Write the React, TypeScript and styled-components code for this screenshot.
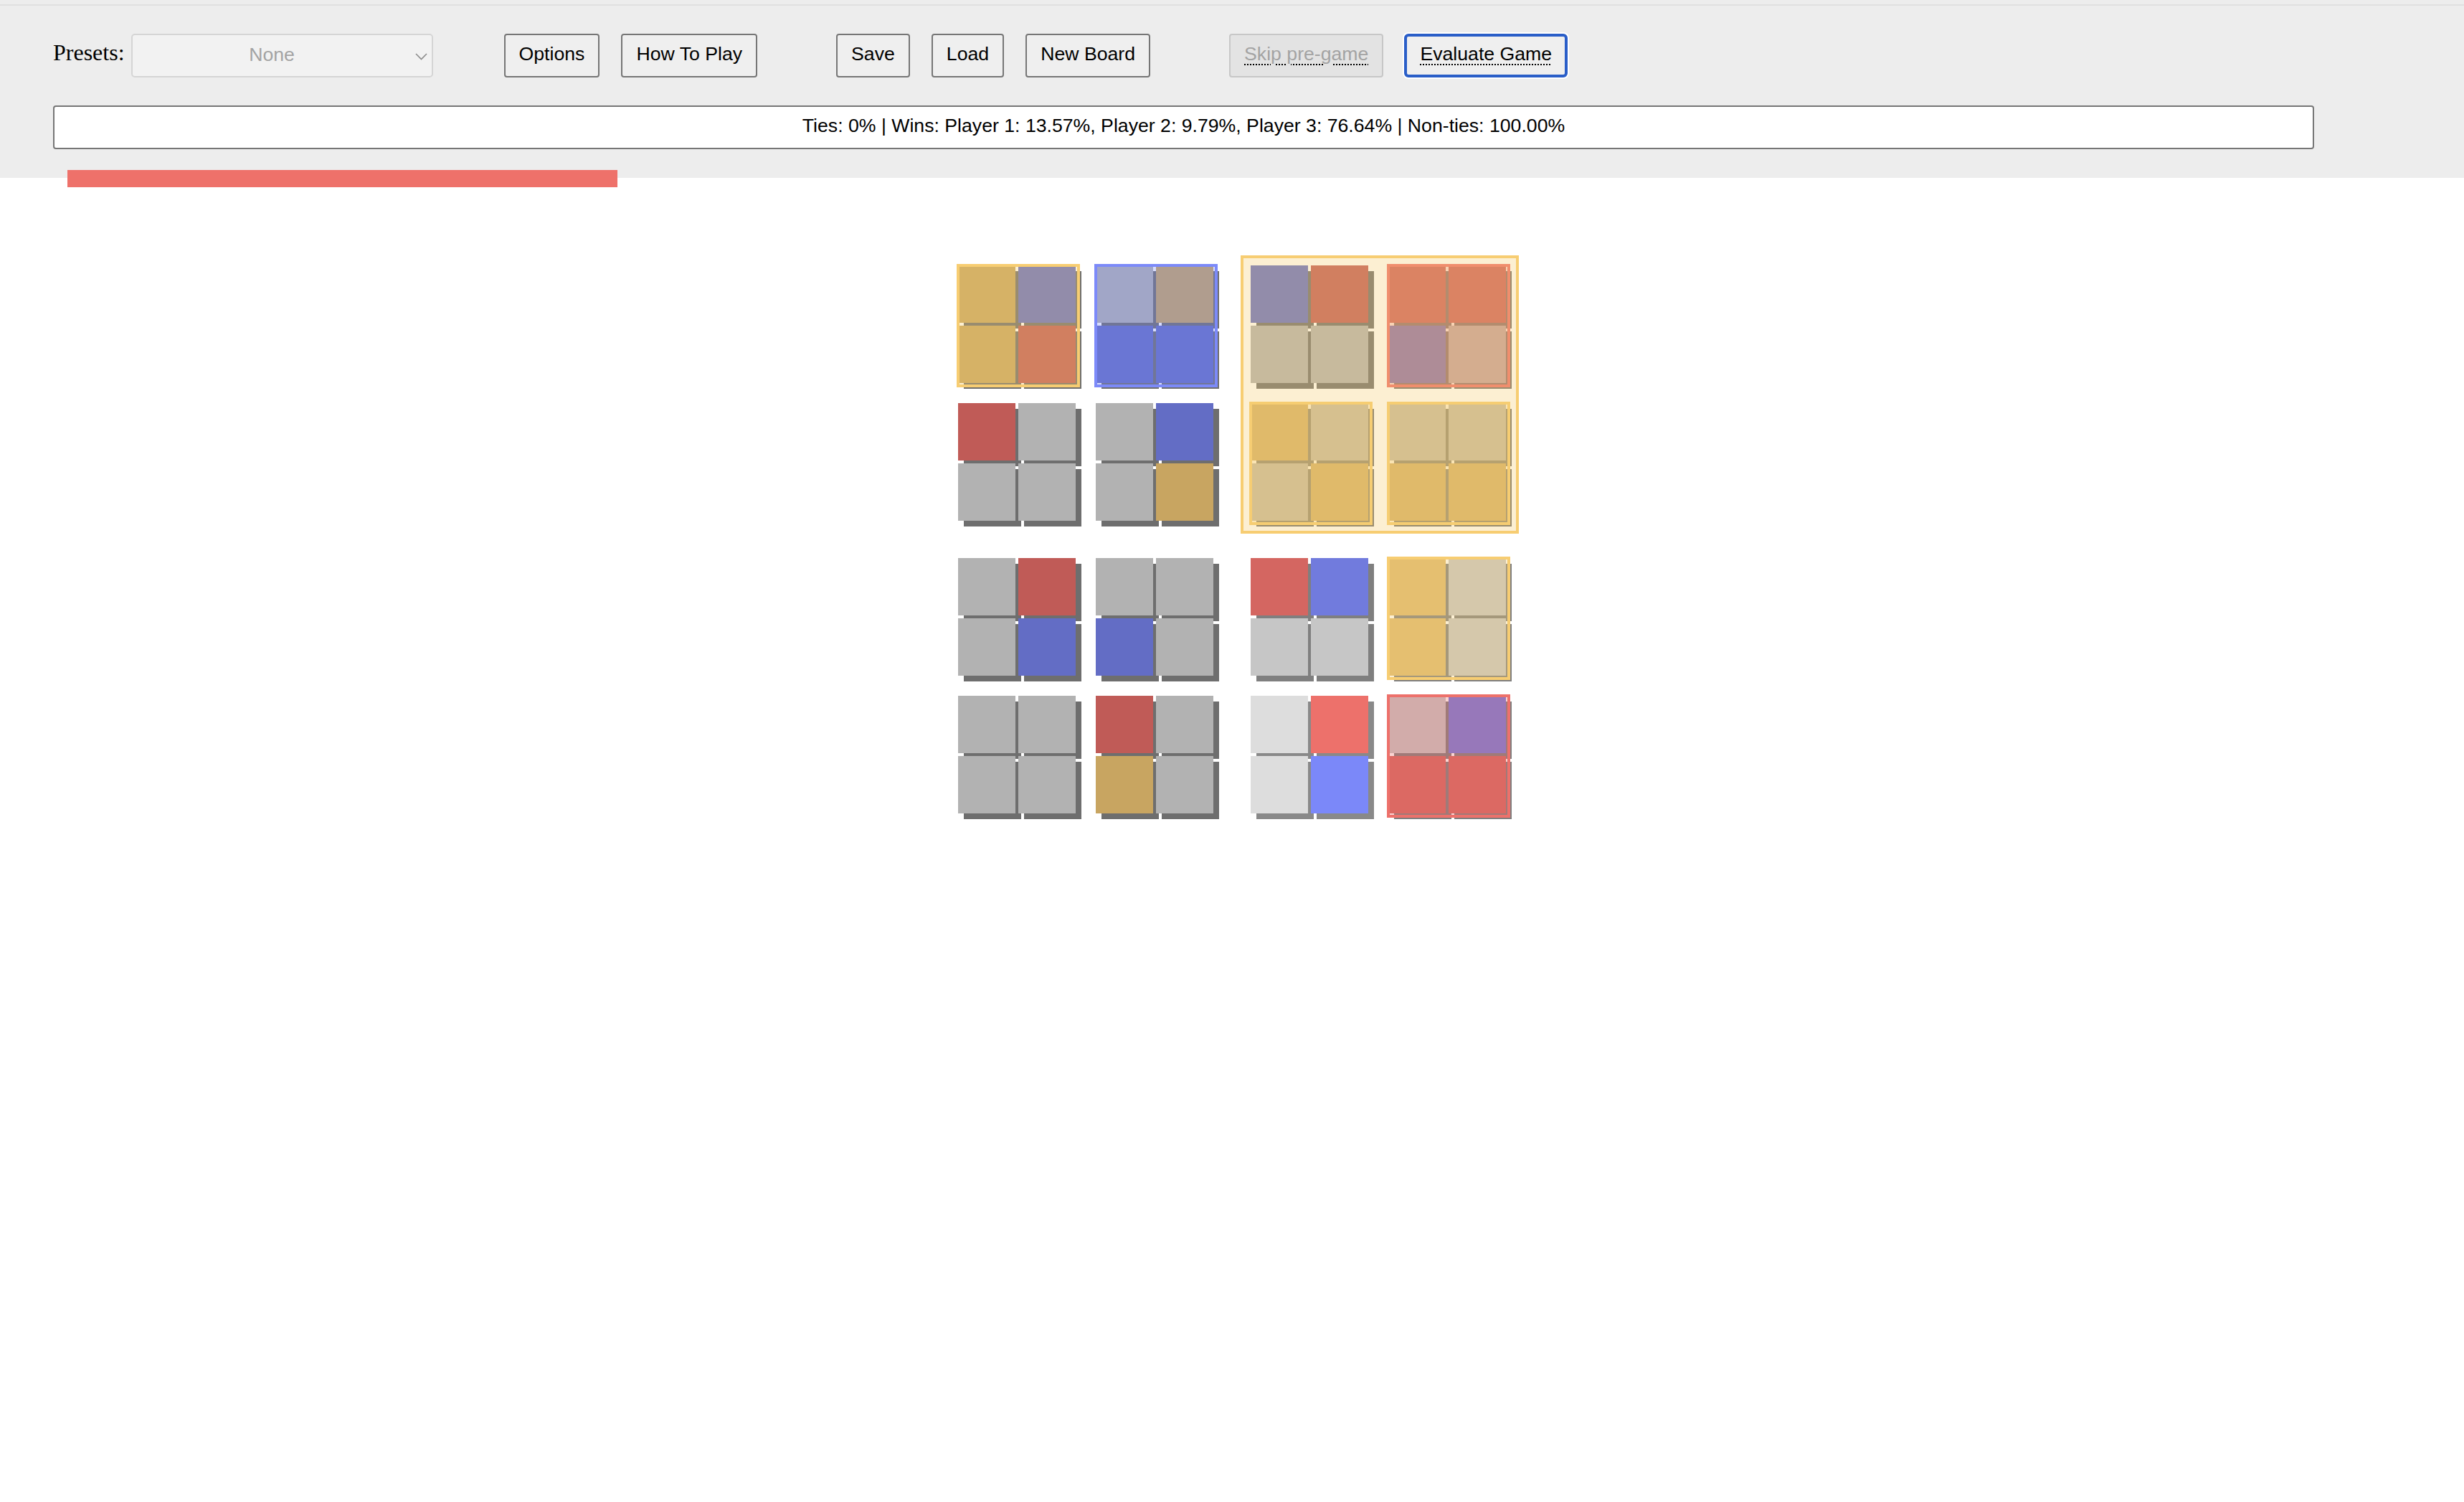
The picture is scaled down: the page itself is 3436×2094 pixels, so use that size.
import React from "react";
import styled, { createGlobalStyle } from "styled-components";

const GlobalStyle = createGlobalStyle`
  html, body {
    margin: 0;
    padding: 0;
    background: #ffffff;
  }
  body {
    font-family: "Liberation Sans", Arial, sans-serif;
    color: #000;
  }
`;

type Tone = "base" | "light" | "lighter";
type Piece = "g" | "r" | "b" | "y";
type Mark = "yellow" | "blue" | "red" | null;

const palettes: Record<Tone, Record<Piece | "shadow", string>> = {
  base: { g: "#b2b2b2", r: "#c05b57", b: "#636dc5", y: "#c8a561", shadow: "#6e6e6e" },
  light: { g: "#c6c6c6", r: "#d46661", b: "#717bdd", y: "#deb96f", shadow: "#7f7f7f" },
  lighter: { g: "#dddddd", r: "#ed716b", b: "#7b88f9", y: "#f7ce72", shadow: "#898989" },
};

const marks: Record<Exclude<Mark, null>, { border: string; fill: string }> = {
  yellow: { border: "#f7cd72", fill: "rgba(247, 205, 114, 0.32)" },
  blue: { border: "#7c8af9", fill: "rgba(124, 138, 249, 0.3)" },
  red: { border: "#ed716b", fill: "rgba(237, 113, 107, 0.3)" },
};

interface MiniData {
  cells: Piece[];
  tone?: Tone;
  mark?: Mark;
}
interface GroupData {
  mark?: Mark;
  minis: MiniData[];
}

const groups: GroupData[] = [
  {
    minis: [
      { cells: ["y", "b", "y", "r"], mark: "yellow" },
      { cells: ["g", "y", "b", "b"], mark: "blue" },
      { cells: ["r", "g", "g", "g"] },
      { cells: ["g", "b", "g", "y"] },
    ],
  },
  {
    mark: "yellow",
    minis: [
      { cells: ["b", "r", "g", "g"] },
      { cells: ["r", "r", "b", "g"], mark: "red" },
      { cells: ["y", "g", "g", "y"], mark: "yellow" },
      { cells: ["g", "g", "y", "y"], mark: "yellow" },
    ],
  },
  {
    minis: [
      { cells: ["g", "r", "g", "b"] },
      { cells: ["g", "g", "b", "g"] },
      { cells: ["g", "g", "g", "g"] },
      { cells: ["r", "g", "y", "g"] },
    ],
  },
  {
    minis: [
      { cells: ["r", "b", "g", "g"], tone: "light" },
      { cells: ["y", "g", "y", "g"], tone: "light", mark: "yellow" },
      { cells: ["g", "r", "g", "b"], tone: "lighter" },
      { cells: ["g", "b", "r", "r"], tone: "light", mark: "red" },
    ],
  },
];

/* ---------- header ---------- */

const Header = styled.header`
  background: #ededed;
  padding-top: 6px;
  display: flex;
  flex-direction: column;
`;

const TopRule = styled.div`
  height: 2px;
  background: #e0e0e0;
`;

const Toolbar = styled.div`
  margin-top: 39px;
  padding-left: 74px;
  height: 61px;
  display: flex;
  align-items: center;
`;

const ToolGroup = styled.div<{ $space?: number; $gap?: number }>`
  display: flex;
  align-items: center;
  gap: ${(p) => p.$gap ?? 30}px;
  margin-left: ${(p) => p.$space ?? 0}px;
`;

const PresetLabel = styled.label`
  font-family: "Liberation Serif", "Times New Roman", serif;
  font-size: 32px;
  padding-bottom: 9px;
`;

const SelectWrap = styled.div`
  position: relative;
  width: 421px;
  height: 61px;
`;

const PresetSelect = styled.select`
  appearance: none;
  -webkit-appearance: none;
  box-sizing: border-box;
  width: 100%;
  height: 100%;
  margin: 0;
  padding: 0 36px 3px 8px;
  background: #f2f2f2;
  border: 2px solid #d5d5d5;
  border-radius: 5px;
  color: #a3a3a3;
  font-family: "Liberation Sans", Arial, sans-serif;
  font-size: 26.6667px;
  text-align: center;
  text-align-last: center;
  opacity: 1;
`;

const Chevron = styled.svg`
  position: absolute;
  right: 8px;
  top: 27px;
  width: 17px;
  height: 10px;
  pointer-events: none;
`;

const Button = styled.button<{ $focus?: boolean }>`
  box-sizing: border-box;
  height: 61px;
  margin: 0;
  padding: 0 ${(p) => (p.$focus ? 18 : 19)}px 4px;
  background: #efefef;
  border: ${(p) => (p.$focus ? "4px solid #2a5ec8" : "2px solid #767676")};
  border-radius: ${(p) => (p.$focus ? 6 : 4)}px;
  box-shadow: ${(p) => (p.$focus ? "0 0 0 2px #ffffff" : "none")};
  color: #000;
  font-family: "Liberation Sans", Arial, sans-serif;
  font-size: 26.6667px;
  white-space: nowrap;
  cursor: pointer;

  &:disabled {
    background: #e3e3e3;
    border-color: #c7c7c7;
    color: #a3a3a3;
    cursor: default;
  }
`;

const Hint = styled.span`
  text-decoration: underline dotted #000;
  text-decoration-thickness: 2px;
  text-underline-offset: 5px;
`;

const StatusBox = styled.div`
  box-sizing: border-box;
  margin: 39px 0 0 74px;
  width: 3153px;
  height: 61px;
  padding-bottom: 4px;
  background: #ffffff;
  border: 2px solid #767676;
  border-radius: 4px;
  display: flex;
  align-items: center;
  justify-content: center;
  font-family: "Liberation Sans", Arial, sans-serif;
  font-size: 26.6667px;
  color: #000;
`;

const TurnBar = styled.div<{ $color: string }>`
  margin: 29px 0 -13px 94px;
  width: 767px;
  height: 24px;
  background: ${(p) => p.$color};
`;

/* ---------- board ---------- */

const Board = styled.main`
  margin: 110px auto 0;
  width: 788px;
  display: grid;
  grid-template-columns: repeat(2, 380px);
  gap: 28px;
`;

const Group = styled.div`
  position: relative;
  box-sizing: border-box;
  width: 380px;
  padding: 12px;
  display: grid;
  grid-template-columns: repeat(2, 164px);
  gap: 28px;
`;

const Mini = styled.div`
  position: relative;
  display: grid;
  grid-template-columns: repeat(2, 80px);
  grid-auto-rows: 80px;
  gap: 4px;
`;

const Cell = styled.div<{ $color: string; $shadow: string }>`
  width: 80px;
  height: 80px;
  background: ${(p) => p.$color};
  box-shadow: 8px 8px 0 ${(p) => p.$shadow};
`;

const Highlight = styled.div<{ $border: string; $fill: string }>`
  position: absolute;
  top: -2px;
  left: -2px;
  width: calc(100% + 8px);
  height: calc(100% + 8px);
  box-sizing: border-box;
  border: 4px solid ${(p) => p.$border};
  background: ${(p) => p.$fill};
  pointer-events: none;
`;

function MiniBoard({ data }: { data: MiniData }) {
  const pal = palettes[data.tone ?? "base"];
  return (
    <Mini>
      {data.cells.map((c, i) => (
        <Cell key={i} $color={pal[c]} $shadow={pal.shadow} />
      ))}
      {data.mark && <Highlight $border={marks[data.mark].border} $fill={marks[data.mark].fill} />}
    </Mini>
  );
}

function BigBoard({ data }: { data: GroupData }) {
  return (
    <Group>
      {data.minis.map((m, i) => (
        <MiniBoard key={i} data={m} />
      ))}
      {data.mark && <Highlight $border={marks[data.mark].border} $fill={marks[data.mark].fill} />}
    </Group>
  );
}

export default function App() {
  return (
    <>
      <GlobalStyle />
      <Header>
        <TopRule />
        <Toolbar>
          <ToolGroup $gap={9}>
            <PresetLabel htmlFor="presets">Presets:</PresetLabel>
            <SelectWrap>
              <PresetSelect id="presets" disabled defaultValue="none">
                <option value="none">None</option>
              </PresetSelect>
              <Chevron viewBox="0 0 17 10" fill="none">
                <polyline points="1,1 8.5,8.5 16,1" stroke="#8c8c8c" strokeWidth="1.6" />
              </Chevron>
            </SelectWrap>
          </ToolGroup>
          <ToolGroup $space={99}>
            <Button>Options</Button>
            <Button>How To Play</Button>
          </ToolGroup>
          <ToolGroup $space={110}>
            <Button>Save</Button>
            <Button>Load</Button>
            <Button>New Board</Button>
          </ToolGroup>
          <ToolGroup $space={110} $gap={29}>
            <Button disabled>
              <Hint>Skip pre-game</Hint>
            </Button>
            <Button $focus>
              <Hint>Evaluate Game</Hint>
            </Button>
          </ToolGroup>
        </Toolbar>
        <StatusBox>
          Ties: 0% | Wins: Player 1: 13.57%, Player 2: 9.79%, Player 3: 76.64% | Non-ties: 100.00%
        </StatusBox>
        <TurnBar $color="#ee716a" />
      </Header>
      <Board>
        {groups.map((g, i) => (
          <BigBoard key={i} data={g} />
        ))}
      </Board>
    </>
  );
}
